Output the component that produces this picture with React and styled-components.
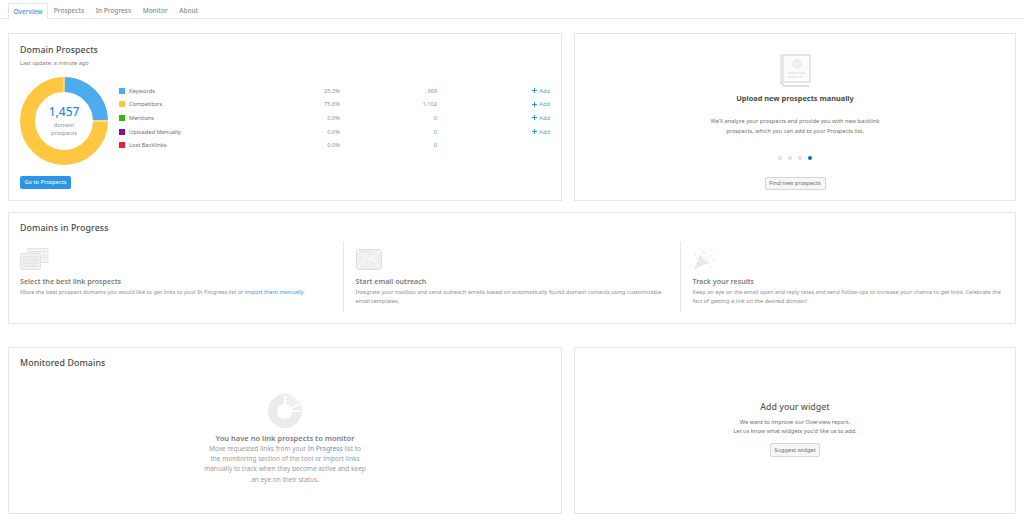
import React from "react";
import styled, { createGlobalStyle } from "styled-components";

const Global = createGlobalStyle`
  html, body { margin: 0; padding: 0; background: #fff; }
  body { font-family: "Noto Sans", "Open Sans", sans-serif; color: #555; overflow: hidden; }
  * { box-sizing: border-box; }
`;
const Page = styled.div`width: 1024px; height: 521px; display: flex; flex-direction: column;`;
const Tabs = styled.nav`height: 19px; padding: 3px 0 0 8px; display: flex; border-bottom: 1px solid #e3e3e3;`;
const Tab = styled.div`
  height: 16px; padding: 0 5.8px; font-size: 6.5px; line-height: 15px;
  color: ${p => (p.$active ? "#3a98e0" : "#8a8a8a")};
  font-weight: 500; white-space: nowrap;
  ${p => p.$active && "padding: 0 4.5px; border: 1px solid #e3e3e3; border-bottom: 1px solid #fff; border-radius: 2px 2px 0 0; background:#fff;"}
`;
const Content = styled.main`padding: 14px 8px 0 8px; display: flex; flex-direction: column; width: 1024px;`;
const Row = styled.div`display: grid; grid-template-columns: 554px 442px; gap: 12px; margin-top: ${p => p.$mt || 0}px;`;
const Card = styled.section`
  height: ${p => p.$h}px; border: 1px solid #e6e6e6; background: #fff; min-width: 0;
`;
const ProspectsCard = styled(Card)`padding: 10px 11px 0 11px;`;
const Title = styled.h2`margin: 0; font-size: 8.8px; line-height: 12px; font-weight: 500; color: #4a4a4a; letter-spacing: .1px;`;
const Sub = styled.div`font-size: 5.6px; line-height: 8px; color: #808080; margin-top: 3px;`;
const Chart = styled.div`display: flex; margin-top: 10px; height: 90px;`;
const Donut = styled.div`width: 88px; height: 88px; position: relative; flex: none;`;
const DonutLabel = styled.div`
  position: absolute; inset: 0; display: flex; flex-direction: column; align-items: center; justify-content: center;
`;
const Big = styled.div`font-size: 12px; line-height: 14px; font-weight: 500; color: #2d8fdc;`;
const Small = styled.div`font-size: 5.7px; line-height: 8.2px; color: #929292; text-align: center; margin-top: 2px;`;
const Legend = styled.div`flex: 1; margin-left: 11px; padding-top: 7px; display: flex; flex-direction: column;`;
const LegendRow = styled.div`
  height: 13.6px; display: grid; grid-template-columns: 10px 1fr 40px 97px 113px; align-items: center;
  font-size: 5.7px; color: #707070;
`;
const Swatch = styled.span`width: 6px; height: 6px; background: ${p => p.$c}; display: block;`;
const Pct = styled.span`text-align: right; color: #929292;`;
const Count = styled.span`text-align: right; color: #5a9dd3;`;
const AddLink = styled.span`text-align: right; color: #5a9dd3; display: flex; justify-content: flex-end; align-items: center; gap: 2.5px;`;
const PrimaryButton = styled.div`
  width: 51px; height: 13px; background: #2d95e3; border-radius: 2px; color: #fff; font-size: 5.7px;
  line-height: 13px; text-align: center; margin-top: 9px;
`;
const SlideCard = styled(Card)`display: flex; flex-direction: column; align-items: center; padding-top: 19px;`;
const SlideTitle = styled.h3`margin: 5px 0 0; font-size: 7.4px; line-height: 10px; font-weight: 700; color: #4a4a4a;`;
const SlideText = styled.p`margin: 13px 0 0; font-size: 5.7px; line-height: 10px; color: #707070; text-align: center;`;
const Dots = styled.div`display: flex; gap: 6px; margin-top: 20px;`;
const Dot = styled.span`
  width: 4px; height: 4px; border-radius: 50%; display: block;
  ${p => (p.$on ? "background:#0a6fc2;" : "border: 1px solid #cfcfcf;")}
`;
const GhostButton = styled.div`
  height: ${p => p.$ht || 13}px; width: ${p => p.$w}px; border: 1px solid #d5d5d5; border-radius: 2px; background: #f6f6f6;
  font-size: 5.7px; line-height: ${p => (p.$ht || 13) - 2}px; text-align: center; color: #707070; margin-top: ${p => p.$mt}px;
`;
const ProgressCard = styled(Card)`padding: 9px 11px 0 11px; margin-top: 11px;`;
const Steps = styled.div`display: grid; grid-template-columns: 323px 337px 1fr; margin-top: 8px; height: 70px;`;
const Step = styled.div`
  padding: 5px 0 0 ${p => (p.$first ? "0" : "11.5px")};
  ${p => !p.$first && "border-left: 1px solid #e6e6e6;"}
`;
const IconSlot = styled.div`height: 23px; display: flex; align-items: flex-end;`;
const StepTitle = styled.h4`margin: 6px 0 0; font-size: 7.1px; line-height: 10px; font-weight: 600; color: #7c7c7c;`;
const StepText = styled.p`margin: 2px 0 0; font-size: 5.6px; line-height: 8.6px; color: #909090; white-space: nowrap;`;
const A = styled.span`color: #4a96d2;`;
const MonitorCard = styled(Card)`padding: 8.5px 11px 0 11px;`;
const Empty = styled.div`display: flex; flex-direction: column; align-items: center; margin-top: 25px;`;
const EmptyTitle = styled.h3`margin: 5.5px 0 0; font-size: 7.5px; line-height: 10px; font-weight: 600; color: #7c7c7c;`;
const EmptyText = styled.p`margin: 1px 0 0; font-size: 6.5px; line-height: 10.2px; color: #9c9c9c; text-align: center;`;
const WidgetCard = styled(Card)`display: flex; flex-direction: column; align-items: center; padding-top: 54px;`;
const WidgetTitle = styled.h3`margin: 0; font-size: 8.8px; line-height: 11px; font-weight: 500; color: #5a5a5a;`;
const WidgetText = styled.p`margin: 5px 0 0; font-size: 5.7px; line-height: 9px; color: #707070; text-align: center;`;

const rows = [
  ["Keywords", "#4dabf0", "25.3%", "369", true],
  ["Competitors", "#ffc63f", "75.6%", "1,102", true],
  ["Mentions", "#3cb011", "0.0%", "0", true],
  ["Uploaded Manually", "#8a0f8e", "0.0%", "0", true],
  ["Lost Backlinks", "#ee1c2e", "0.0%", "0", false],
];

const Plus = () => (
  <svg width="5" height="5" viewBox="0 0 5 5"><path d="M2.5 0v5M0 2.5h5" stroke="#2d95e3" strokeWidth="1" /></svg>
);

const DonutSvg = () => (
  <svg width="88" height="88" viewBox="0 0 88 88">
    <circle cx="44" cy="44" r="36.5" fill="none" stroke="#ffc63f" strokeWidth="15" />
    <path d="M44.700 7.500A36.500 36.500 0 0 1 80.500 43" fill="none" stroke="#4dabf0" strokeWidth="15" />
    <path d="M44 0v15M73 44h15" stroke="#fff" strokeWidth=".8" />
  </svg>
);

const BookIcon = () => (
  <svg width="33" height="35" viewBox="0 0 33 35">
    <path d="M2 1h29a1 1 0 0 1 1 1v28H3a2 2 0 0 1-2-2V2a1 1 0 0 1 1-1z" fill="#e6e6e6" />
    <path d="M1 29a3 3 0 0 0 3 3v2h26v-2H5a2 2 0 0 1 0-3z" fill="#dedede" />
    <rect x="5" y="3" width="25" height="25" fill="#fbfbfb" />
    <circle cx="18" cy="11" r="4" fill="none" stroke="#cfcfc9" strokeWidth="1" strokeDasharray="1.6 .6" />
    <circle cx="18" cy="11" r="2" fill="none" stroke="#cfcfc9" strokeWidth=".7" />
    <path d="M9 20h17M9 24h9M20 24h4" stroke="#d8d5c8" strokeWidth=".8" />
  </svg>
);
const CardsIcon = () => (
  <svg width="29" height="22" viewBox="0 0 29 22">
    <rect x="7" y="0.500" width="21" height="14" rx="1" fill="#f4f4f4" stroke="#e2e2e2" />
    <path d="M9 3.500h17" stroke="#e0e0e0" />
    <path d="M23 7h3M23 9.500h3" stroke="#dcdcdc" />
    <rect x="0.500" y="5.500" width="20" height="16" rx="1" fill="#f0f0f0" stroke="#e2e2e2" />
    <path d="M3 9h15M3 12h15M3 15h15M3 18h15" stroke="#e0e0e0" />
  </svg>
);
const MailIcon = () => (
  <svg width="26" height="21" viewBox="0 0 26 21">
    <rect x=".5" y=".5" width="25" height="20" rx="1.500" fill="#efefef" stroke="#dedede" />
    <path d="M1 1l12 10L25 1M1 20l9-11.500M25 20l-9-11.500" fill="none" stroke="#fafafa" strokeWidth="1.200" />
    <path d="M3 3h6M11 3h2" stroke="#d8d8d8" strokeWidth=".6" />
  </svg>
);
const PartyIcon = () => (
  <svg width="22" height="21" viewBox="0 0 22 21">
    <path d="M1 20L7 6l8 8z" fill="#e6e6e6" />
    <path d="M3 15l3 3M5 11l5 5M7 8l6 5" stroke="#fafafa" strokeWidth=".8" />
    <path d="M11 8l3-6M13 10l6-4M10 4l1-3" stroke="#d2d2d2" strokeWidth=".7" strokeDasharray="1 1" />
    <path d="M2 5h1M6 1h1M17 1h1M21 4h1M20 11h1M17 18h1M15 14h1M3 9h1" stroke="#cfcfcf" strokeWidth="1" />
  </svg>
);
const PieIcon = () => (
  <svg width="34" height="34" viewBox="0 0 34 34">
    <circle cx="17" cy="17" r="16.500" fill="none" stroke="#dedede" strokeWidth=".8" />
    <path d="M16 1A16 16 0 1 0 33 18H24A7.500 7.500 0 1 1 16 10z" fill="#ebebeb" />
    <path d="M18 1.500A15.500 15.500 0 0 1 30.500 9.500L23.500 13.500A7 7 0 0 0 18 10.500z" fill="#e9e9e9" />
    <path d="M18 4l6-2M18 7.500l10-4.500M19.500 10.500l10-5M22 12.500l9-4.500" stroke="#fff" strokeWidth=".9" />
    <path d="M24.500 15L31.500 11.500a15.500 15.500 0 0 1 1 5H24.500z" fill="#ebebeb" />
  </svg>
);

export default function App() {
  return (
    <Page>
      <Global />
      <Tabs>
        <Tab $active>Overview</Tab>
        <Tab>Prospects</Tab>
        <Tab>In Progress</Tab>
        <Tab>Monitor</Tab>
        <Tab>About</Tab>
      </Tabs>
      <Content>
        <Row>
          <ProspectsCard $h={168}>
            <Title>Domain Prospects</Title>
            <Sub>Last update: a minute ago</Sub>
            <Chart>
              <Donut>
                <DonutSvg />
                <DonutLabel>
                  <Big>1,457</Big>
                  <Small>domain<br />prospects</Small>
                </DonutLabel>
              </Donut>
              <Legend>
                {rows.map(([n, c, p, v, add]) => (
                  <LegendRow key={n}>
                    <Swatch $c={c} />
                    <span>{n}</span>
                    <Pct>{p}</Pct>
                    <Count>{v}</Count>
                    {add ? <AddLink><Plus />Add</AddLink> : <span />}
                  </LegendRow>
                ))}
              </Legend>
            </Chart>
            <PrimaryButton>Go to Prospects</PrimaryButton>
          </ProspectsCard>
          <SlideCard $h={168}>
            <BookIcon />
            <SlideTitle>Upload new prospects manually</SlideTitle>
            <SlideText>We'll analyze your prospects and provide you with new backlink<br />prospects, which you can add to your Prospects list.</SlideText>
            <Dots><Dot /><Dot /><Dot /><Dot $on /></Dots>
            <GhostButton $w={61} $mt={17}>Find new prospects</GhostButton>
          </SlideCard>
        </Row>
        <ProgressCard $h={112}>
          <Title>Domains in Progress</Title>
          <Steps>
            <Step $first>
              <IconSlot><CardsIcon /></IconSlot>
              <StepTitle>Select the best link prospects</StepTitle>
              <StepText>Move the best prospect domains you would like to get links to your In Progress list or <A>import them manually.</A></StepText>
            </Step>
            <Step>
              <IconSlot><MailIcon /></IconSlot>
              <StepTitle>Start email outreach</StepTitle>
              <StepText>Integrate your mailbox and send outreach emails based on automatically found domain contacts using customizable<br />email templates.</StepText>
            </Step>
            <Step>
              <IconSlot><PartyIcon /></IconSlot>
              <StepTitle>Track your results</StepTitle>
              <StepText>Keep an eye on the email open and reply rates and send follow-ups to increase your chance to get links. Celebrate the<br />fact of getting a link on the desired domain!</StepText>
            </Step>
          </Steps>
        </ProgressCard>
        <Row $mt={23}>
          <MonitorCard $h={167}>
            <Title>Monitored Domains</Title>
            <Empty>
              <PieIcon />
              <EmptyTitle>You have no link prospects to monitor</EmptyTitle>
              <EmptyText>Move requested links from your <A>In Progress</A> list to<br />the monitoring section of the tool or import links<br />manually to track when they become active and keep<br />an eye on their status.</EmptyText>
            </Empty>
          </MonitorCard>
          <WidgetCard $h={167}>
            <WidgetTitle>Add your widget</WidgetTitle>
            <WidgetText>We want to improve our Overview report.<br />Let us know what widgets you'd like us to add.</WidgetText>
            <GhostButton $w={50} $ht={14} $mt={7}>Suggest widget</GhostButton>
          </WidgetCard>
        </Row>
      </Content>
    </Page>
  );
}
